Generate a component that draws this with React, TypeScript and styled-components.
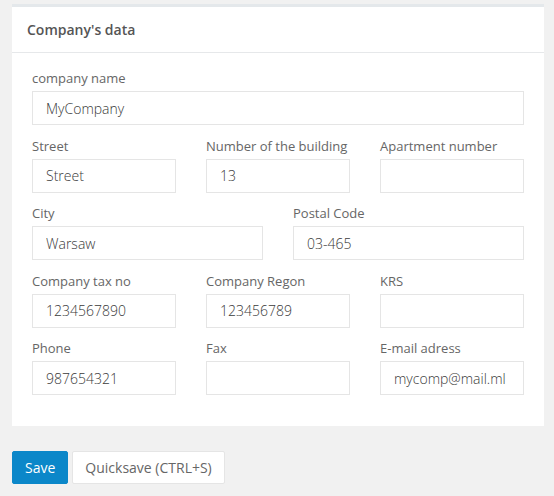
import styled, { createGlobalStyle } from "styled-components";

const GlobalStyle = createGlobalStyle`
  html, body {
    margin: 0;
    padding: 0;
    background: #f1f1f1;
  }
  body {
    font-family: "Open Sans", "Liberation Sans", Arial, sans-serif;
    color: #555;
  }
  * {
    box-sizing: border-box;
  }
`;

const Page = styled.div`
  width: 554px;
  min-height: 496px;
  padding: 4px 10px 0 12px;
`;

const Panel = styled.section`
  background: #fff;
  border-top: 3px solid #e4e8eb;
`;

const PanelHeader = styled.div`
  height: 46px;
  padding: 0 15px;
  display: flex;
  align-items: center;
  border-bottom: 1px solid #e6e8ea;
  font-size: 14px;
  font-weight: 600;
  color: #555;
`;

const PanelBody = styled.div`
  padding: 15px 20px 20px;
`;

const Row = styled.div<{ $cols: number }>`
  display: grid;
  grid-template-columns: repeat(${p => p.$cols}, 1fr);
  column-gap: 30px;
  margin-bottom: 10.5px;
`;

const Field = styled.div`
  display: flex;
  flex-direction: column;
`;

const Label = styled.label`
  font-size: 13px;
  line-height: 20px;
  color: #666;
  margin-bottom: 3px;
`;

const Input = styled.input`
  height: 34px;
  width: 100%;
  border: 1px solid #e5e5e5;
  border-radius: 0;
  padding: 0 13px;
  font-family: inherit;
  font-size: 14px;
  font-weight: 300;
  color: #3a3a3a;
  background: #fff;
  outline: none;
`;

const Actions = styled.div`
  display: flex;
  gap: 4px;
  margin-top: 25px;
`;

const Button = styled.button<{ $primary?: boolean }>`
  height: 33px;
  padding: 0 12px;
  border-radius: 2px;
  font-family: inherit;
  font-size: 14px;
  cursor: pointer;
  border: 1px solid ${p => (p.$primary ? "#0b87c9" : "#e5e5e5")};
  background: ${p => (p.$primary ? "#0b87c9" : "#fff")};
  color: ${p => (p.$primary ? "#fff" : "#666")};
`;

type F = { label: string; value?: string };

const rows: F[][] = [
  [{ label: "company name", value: "MyCompany" }],
  [
    { label: "Street", value: "Street" },
    { label: "Number of the building", value: "13" },
    { label: "Apartment number" },
  ],
  [
    { label: "City", value: "Warsaw" },
    { label: "Postal Code", value: "03-465" },
  ],
  [
    { label: "Company tax no", value: "1234567890" },
    { label: "Company Regon", value: "123456789" },
    { label: "KRS" },
  ],
  [
    { label: "Phone", value: "987654321" },
    { label: "Fax" },
    { label: "E-mail adress", value: "mycomp@mail.ml" },
  ],
];

export default function App() {
  return (
    <Page>
      <GlobalStyle />
      <Panel>
        <PanelHeader>Company's data</PanelHeader>
        <PanelBody>
          {rows.map((row, i) => (
            <Row key={i} $cols={row.length}>
              {row.map(f => (
                <Field key={f.label}>
                  <Label>{f.label}</Label>
                  <Input defaultValue={f.value ?? ""} />
                </Field>
              ))}
            </Row>
          ))}
        </PanelBody>
      </Panel>
      <Actions>
        <Button $primary>Save</Button>
        <Button>Quicksave (CTRL+S)</Button>
      </Actions>
    </Page>
  );
}
